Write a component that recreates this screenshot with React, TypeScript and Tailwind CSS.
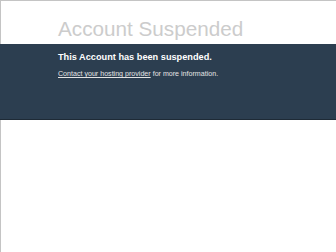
import React from "react";

export default function App() {
  return (
    <div
      className="w-[336px] h-[252px] bg-white border-t border-[#c4c4c4] overflow-hidden"
      style={{ fontFamily: '"Liberation Sans", Arial, sans-serif' }}
    >
      <div className="border-l border-[#c4c4c4]">
        <h1 className="pt-[16px] pb-[3px] pl-[57px] text-[20.7px] leading-[24px] font-normal text-[#cccccc]">
          Account Suspended
        </h1>
      </div>
      <div className="bg-[#2c3e50] border-b border-[#1e2a36] h-[76px] pl-[58px] pt-[7px]">
        <p className="text-[9.2px] leading-[12px] font-bold text-white">
          This Account has been suspended.
        </p>
        <p className="mt-[6px] text-[7.1px] leading-[10px] text-[#e4e4e4]">
          <a href="#" className="underline text-[#e4e4e4]">
            Contact your hosting provider
          </a>{" "}
          for more information.
        </p>
      </div>
      <div className="h-full border-l border-[#c4c4c4]" />
    </div>
  );
}
